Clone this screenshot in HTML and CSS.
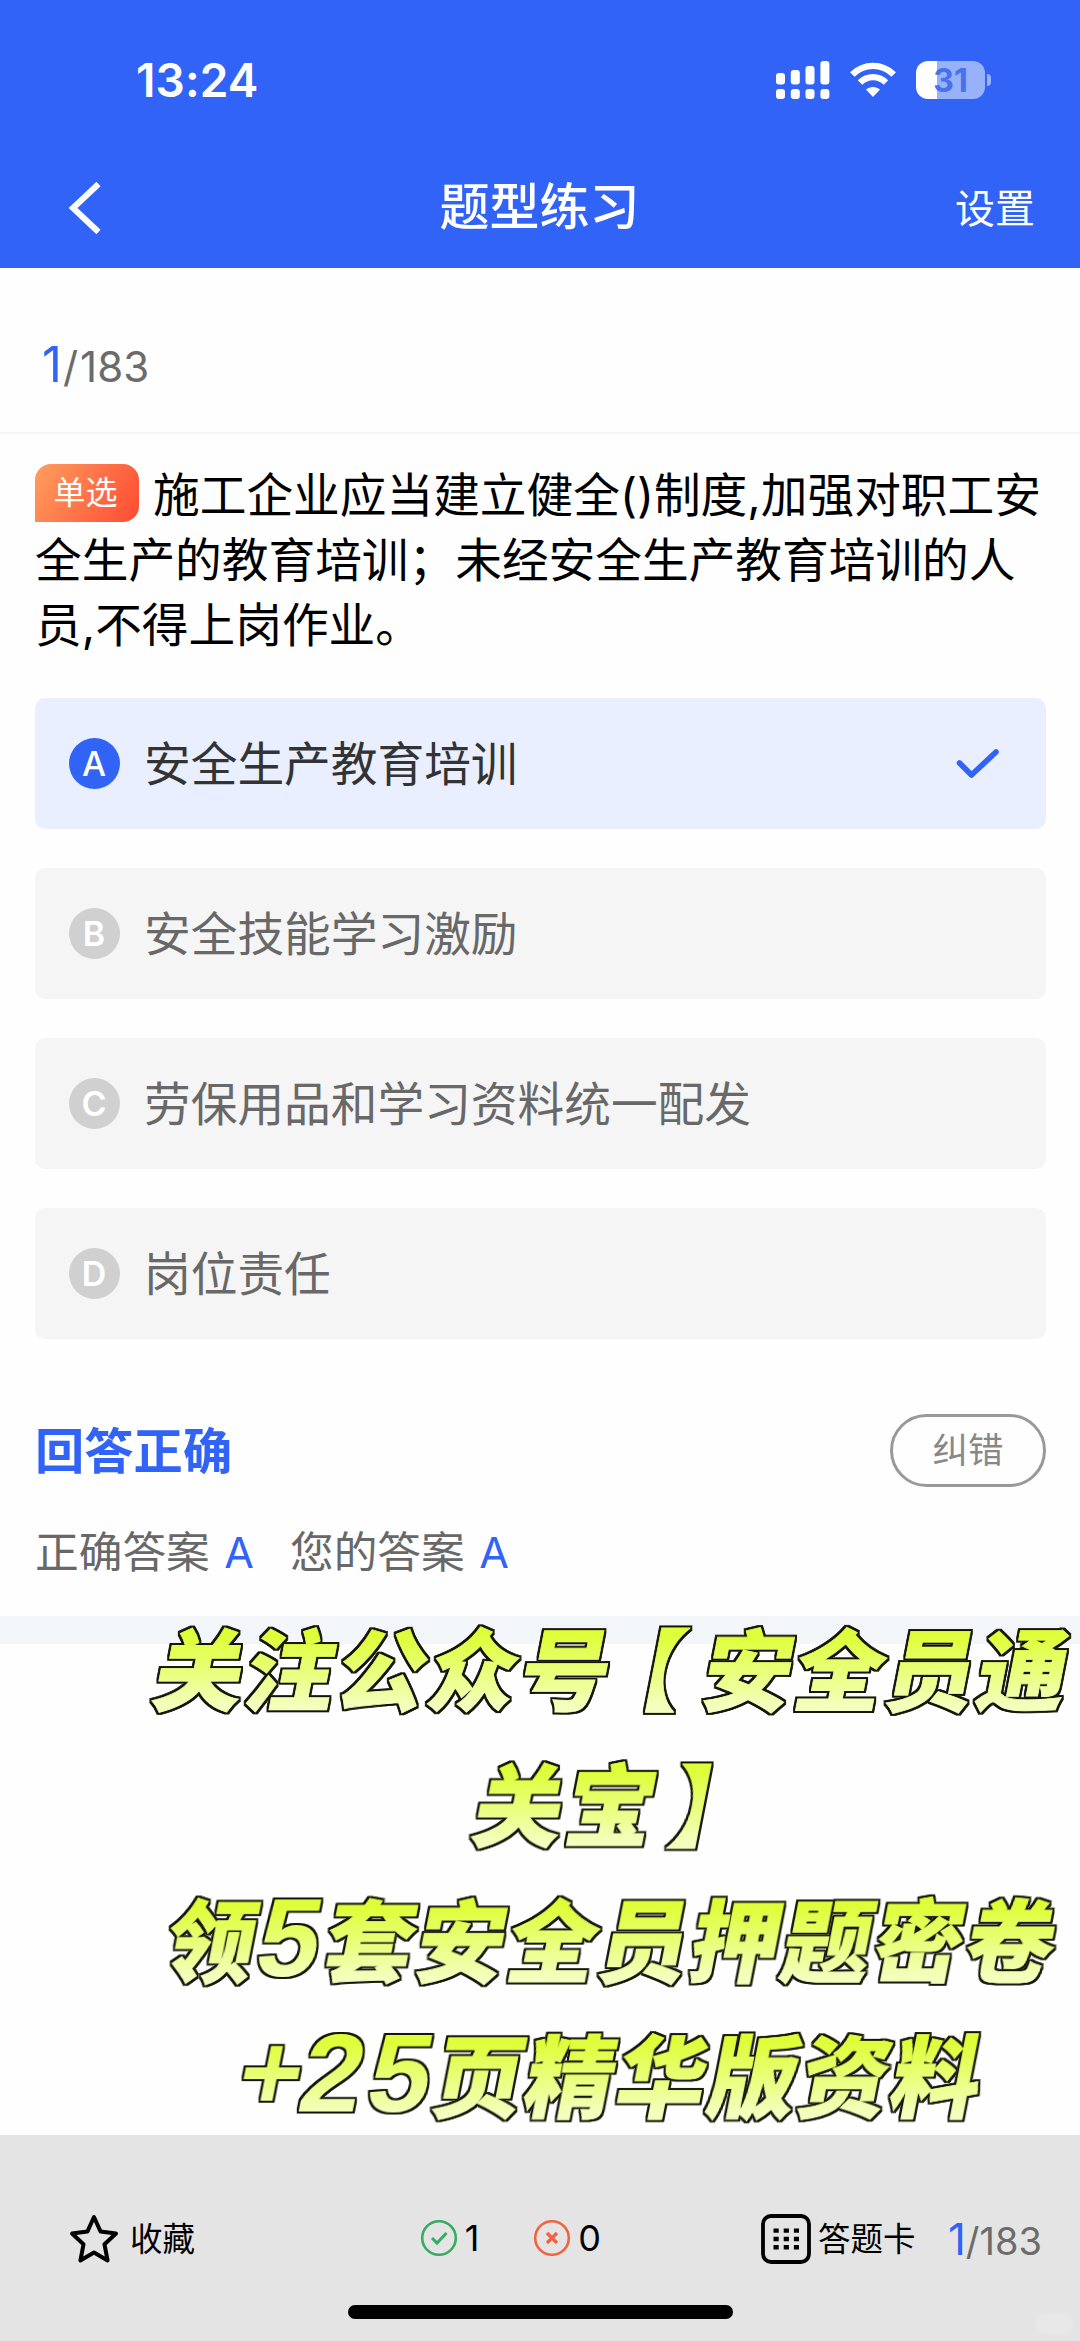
FILE: index.html
```html
<!DOCTYPE html>
<html lang="zh-CN">
<head>
<meta charset="utf-8">
<title>题型练习</title>
<link rel="stylesheet" href="styles.css">
</head>
<body>
<div class="screen">
  <header class="header">
    <div class="status">
      <span class="clock">13:24</span>
      <div class="status-icons">
        <svg width="54" height="38" viewBox="0 0 54 38" fill="#fff">
          <rect x="0" y="12" width="9" height="11.5" rx="3"/><rect x="14.8" y="9" width="9" height="14.5" rx="3"/><rect x="29.5" y="5" width="9" height="18.5" rx="3"/><rect x="44.4" y="0" width="9" height="23.5" rx="3"/>
          <rect x="0" y="28" width="9" height="10" rx="3"/><rect x="14.8" y="28" width="9" height="10" rx="3"/><rect x="29.5" y="28" width="9" height="10" rx="3"/><rect x="44.4" y="28" width="9" height="10" rx="3"/>
        </svg>
        <svg class="wifi" width="46" height="38" viewBox="0 0 46 38" fill="none" stroke="#fff" stroke-width="6.4">
          <path d="M2.3 13.5C14 2 32 2 43.7 13.5"/>
          <path d="M10 21.5C17.500 14.300 28.500 14.300 36 21.500"/>
          <path d="M23 36L16 28.600C20 25 26 25 30 28.600Z" fill="#fff" stroke="none"/>
        </svg>
        <div class="battery"><span class="battery-level">31</span><i class="battery-cap"></i></div>
      </div>
    </div>
    <nav class="nav">
      <svg class="back" width="34" height="54" viewBox="0 0 34 54" fill="none" stroke="#fff" stroke-width="6"><path d="M30.500 3L5 27L30.500 51"/></svg>
      <h1 class="title">题型练习</h1>
      <span class="settings">设置</span>
    </nav>
  </header>

  <div class="progress"><b class="current">1</b><span class="total"><span class="slash">/</span>183</span></div>

  <main class="content">
    <p class="question"><span class="tag">单选</span>施工企业应当建立健全()制度,加强对职工安全生产的教育培训；未经安全生产教育培训的人员,不得上岗作业。</p>
    <div class="options">
      <div class="option selected"><i class="letter">A</i><span class="choice">安全生产教育培训</span>
        <svg class="check" width="46" height="36" viewBox="0 0 46 36" fill="none" stroke="#3164f6" stroke-width="5.600" stroke-linecap="round" stroke-linejoin="round"><path d="M4.500 17L16.500 29L41 6"/></svg>
      </div>
      <div class="option"><i class="letter">B</i><span class="choice">安全技能学习激励</span></div>
      <div class="option"><i class="letter">C</i><span class="choice">劳保用品和学习资料统一配发</span></div>
      <div class="option"><i class="letter">D</i><span class="choice">岗位责任</span></div>
    </div>
    <div class="result"><h2 class="verdict">回答正确</h2><span class="report">纠错</span></div>
    <div class="answers"><span>正确答案<b>A</b></span><span>您的答案<b>A</b></span></div>
  </main>
  <div class="band"></div>

  <svg class="promo" width="1080" height="540" viewBox="0 1600 1080 540">
    <defs>
      <linearGradient id="lime" x1="0" y1="0" x2="0" y2="1">
        <stop offset="0.28" stop-color="#dffe3a"/><stop offset="0.82" stop-color="#f4ffbe"/>
      </linearGradient>
      <filter id="edge" x="-5%" y="-10%" width="110%" height="120%" color-interpolation-filters="sRGB">
        <feMorphology in="SourceAlpha" operator="dilate" radius="2" result="grown"/>
        <feFlood flood-color="#14140a"/>
        <feComposite in2="grown" operator="in"/>
        <feMerge><feMergeNode/><feMergeNode in="SourceGraphic"/></feMerge>
      </filter>
    </defs>
    <g filter="url(#edge)">
      <text transform="translate(149.500 1704) skewX(-11)" x="0 91.500 183 274.500 366 439 549 640.500 732 823.500">关注公众号【安全员通</text>
      <text transform="translate(469 1839.500) skewX(-11)" x="0 91.500 197">关宝】</text>
      <text transform="translate(161 1975) skewX(-11)" x="0 91 159 250.500 342 433.500 525 616.500 708 799.500">领<tspan class="digit" y="1">5</tspan><tspan y="0">套安全员押题密卷</tspan></text>
      <text transform="translate(238 2110.500) skewX(-11)" x="-5 57 125 191 282.500 374 465.500 557 648.500"><tspan class="plus" y="-1">+</tspan><tspan class="digit" y="1">25</tspan><tspan y="0">页精华版资料</tspan></text>
    </g>
  </svg>

  <footer class="footer">
    <div class="tool favorite">
      <svg width="52" height="52" viewBox="0 0 52 52" fill="none" stroke="#000" stroke-width="4" stroke-linejoin="round"><path d="M26 4L32.600 18.600L48 20.500L36.500 31.300L39.600 47.500L26 39.500L12.400 47.500L15.500 31.300L4 20.500L19.400 18.600Z"/></svg>
      <span class="label">收藏</span>
    </div>
    <div class="score right">
      <svg width="38" height="38" viewBox="0 0 38 38" fill="none" stroke="#36ac60" stroke-width="2.600"><circle cx="19" cy="19" r="16.800"/><path d="M12 19L17 24L26.500 14" stroke-width="3"/></svg><span>1</span>
    </div>
    <div class="score wrong">
      <svg width="38" height="38" viewBox="0 0 38 38" fill="none" stroke="#f0633f" stroke-width="2.600"><circle cx="19" cy="19" r="16.800"/><path d="M14 14L24 24M24 14L14 24" stroke-width="3.200"/></svg><span>0</span>
    </div>
    <div class="tool card">
      <svg width="50" height="50" viewBox="0 0 50 50" fill="none" stroke="#000" stroke-width="3.800"><rect x="2" y="2" width="46" height="46" rx="8"/><path d="M12.500 16.600H38M12.500 25H38M12.500 33.300H38" stroke-width="4.400" stroke-dasharray="5.200 5"/></svg>
      <span class="label">答题卡</span>
    </div>
    <div class="mini"><b class="current">1</b><span class="total"><span class="slash">/</span>183</span></div>
    <i class="home-bar"></i>
    <i class="smudge"></i>
  </footer>
</div>
</body>
</html>
```
FILE: styles.css
```css
* { box-sizing: border-box; margin: 0; padding: 0; }
i { font-style: normal; }
body { background: #fefefe; }
.screen {
  position: relative;
  width: 1080px;
  height: 2341px;
  display: flex;
  flex-direction: column;
  overflow: hidden;
  background: #fefefe;
  color: #000;
  font-family: Inter, "Noto Sans CJK SC", sans-serif;
}

.header { height: 268px; background: #3164f6; color: #fff; }
.status { display: flex; justify-content: space-between; align-items: center; height: 160px; padding: 0 95px 0 136px; }
.clock { font-size: 46px; font-weight: 600; letter-spacing: 0.1px; }
.status-icons { display: flex; align-items: center; }
.wifi { margin: 0 20.500px 0 20px; }
.battery {
  position: relative;
  width: 69px;
  height: 38px;
  border-radius: 12px;
  background: linear-gradient(90deg, #fff 21px, #98b1fb 21px);
  text-align: center;
}
.battery-level { display: block; color: #4672ec; font-size: 32px; line-height: 39px; font-weight: 700; }
.battery-cap { position: absolute; left: 71px; top: 13px; width: 4px; height: 12px; border-radius: 0 6px 6px 0; background: #98b1fb; }
.nav { display: grid; grid-template-columns: 200px 1fr 200px; align-items: center; height: 95px; padding: 0 45px 0 68px; }
.title { font-size: 50px; font-weight: 500; line-height: 60px; text-align: center; padding-right: 24px; padding-bottom: 1px; }
.settings { font-size: 40px; line-height: 50px; text-align: right; padding-top: 2px; }

.progress { display: flex; align-items: baseline; height: 166px; padding: 65px 0 0 42px; border-bottom: 2px solid #f4f4f4; }
.current { color: #3164f6; font-size: 49px; font-weight: 400; line-height: 64px; }
.total { color: #6b6b6b; font-size: 42px; }
.slash { margin: 0 2px 0 1px; }

.content { padding: 29px 34px 0 35px; height: 1182px; }
.question { font-size: 46.700px; line-height: 65px; height: 235px; }
.tag {
  display: inline-block;
  position: relative;
  top: -4px;
  width: 104px;
  height: 58px;
  margin-right: 14px;
  border-radius: 16px 16px 16px 0;
  background: linear-gradient(120deg, #ff9e5e, #ff4a33);
  color: #fff;
  font-size: 32px;
  line-height: 58px;
  text-align: center;
  text-indent: -3px;
  vertical-align: 4px;
}
.options { display: grid; gap: 39px; }
.option { display: flex; align-items: center; gap: 24px; height: 131px; padding: 0 45px 0 34px; border-radius: 10px; background: #f5f5f5; color: #686868; font-size: 46.700px; }
.choice { padding-bottom: 6px; }
.option.selected { background: #e9effe; color: #333; }
.letter { width: 51px; height: 51px; border-radius: 50%; background: #d0d0d0; color: #fff; font-size: 34px; font-weight: 600; line-height: 51px; text-align: center; text-indent: -1px; }
.selected .letter { background: #3164f6; font-weight: 500; }
.check { margin-left: auto; }
.result { display: flex; justify-content: space-between; align-items: center; margin-top: 75px; height: 73px; }
.verdict { color: #3164f6; font-size: 49.300px; font-weight: 700; padding-bottom: 6px; }
.report { width: 156px; height: 73px; border: 3px solid #999; border-radius: 37px; color: #888; font-size: 35.500px; line-height: 68px; text-align: center; }
.answers { display: flex; gap: 36px; margin-top: 33px; color: #686868; font-size: 43.700px; line-height: 64px; }
.answers b { margin-left: 14.500px; color: #3164f6; font-size: 43px; font-weight: 400; }
.band { height: 28px; background: #f3f6f8; }

.promo { position: absolute; left: 0; top: 1600px; }
.promo text {
  font-family: "Noto Sans CJK SC", sans-serif;
  font-size: 89px;
  font-weight: 900;
  fill: url(#lime);
  stroke: url(#lime);
  stroke-width: 0.800px;
}
.promo .digit { font-family: "Liberation Sans", sans-serif; font-size: 112px; font-weight: 700; stroke-width: 0; }
.promo .plus { font-family: "Liberation Sans", sans-serif; font-size: 108px; font-weight: 700; stroke-width: 0; }

.footer { position: relative; display: flex; align-items: center; height: 206px; margin-top: auto; padding: 2px 38px 0 68px; background: #e4e4e4; }
.tool { display: flex; align-items: center; font-size: 32.500px; }
.label { padding-bottom: 6px; }
.favorite { width: 352px; gap: 10px; }
.score { display: flex; align-items: center; width: 113.500px; gap: 7px; font-size: 36px; padding-bottom: 3px; }
.wrong { width: 228px; }
.card { gap: 7px; width: 187px; }
.mini { display: flex; align-items: baseline; }
.mini .current { font-size: 44px; }
.mini .total { font-size: 38px; }
.mini .slash { margin: 0; }
.home-bar { position: absolute; left: 348px; top: 170px; width: 385px; height: 14px; border-radius: 7px; background: #000; }
.smudge { position: absolute; right: 8px; top: 179px; width: 36px; height: 20px; border-radius: 8px; background: #e8e8e8; filter: blur(2px); }
```
